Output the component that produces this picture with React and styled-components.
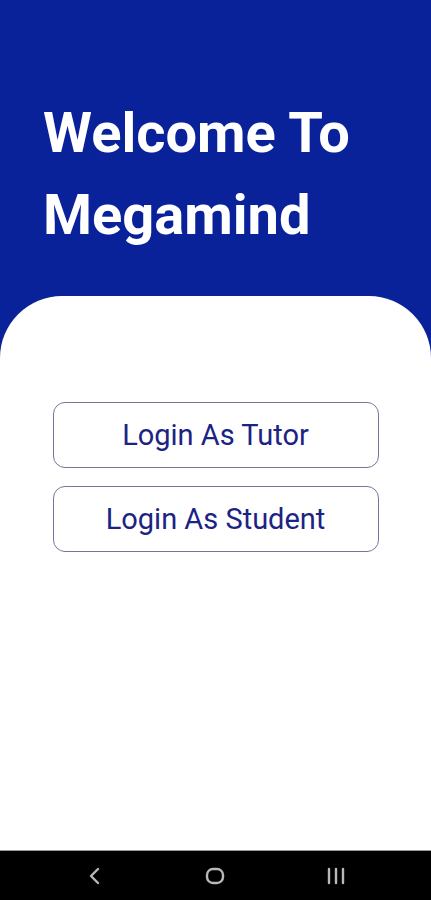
import React from "react";
import styled, { createGlobalStyle } from "styled-components";

const GlobalStyle = createGlobalStyle`
    html, body {
        margin: 0;
        padding: 0;
        background: #ffffff;
    }
    body {
        font-family: Roboto, "Noto Sans", "Liberation Sans", sans-serif;
    }
`;

const Screen = styled.div`
    width: 431px;
    height: 900px;
    display: flex;
    flex-direction: column;
    background: #ffffff;
    overflow: hidden;
`;

const Header = styled.header`
    height: 360px;
    flex-shrink: 0;
    background: #0a2299;
    padding: 92px 0 0 43px;
    box-sizing: border-box;
`;

const Title = styled.h1`
    margin: 0;
    color: #ffffff;
    font-size: 56px;
    line-height: 82px;
    font-weight: 700;
`;

const Card = styled.main`
    flex: 1;
    margin-top: -64px;
    background: #ffffff;
    border-radius: 62px 62px 0 0;
    display: flex;
    flex-direction: column;
    align-items: center;
    gap: 18px;
    padding-top: 106px;
`;

const LoginButton = styled.button`
    width: 326px;
    height: 66px;
    background: #ffffff;
    border: 1.5px solid #737799;
    border-radius: 12px;
    color: #1b2383;
    font-family: Roboto, "Noto Sans", "Liberation Sans", sans-serif;
    font-size: 29px;
    font-weight: 400;
    cursor: pointer;
    box-sizing: border-box;
`;

const NavBar = styled.nav`
    height: 50px;
    flex-shrink: 0;
    background: #000000;
    border-top: 1px solid #9a9a9a;
    display: grid;
    grid-template-columns: repeat(3, 121px);
    align-items: center;
    justify-items: center;
    padding: 0 0 0 33px;
    box-sizing: border-box;
`;

const NavIcon = styled.svg`
    width: 20px;
    height: 18px;
    stroke: #b8b8b8;
    fill: none;
    stroke-width: 2.4;
    stroke-linecap: round;
    stroke-linejoin: round;
`;

const App = () => {
    return (
        <Screen>
            <GlobalStyle />
            <Header>
                <Title>
                    Welcome To
                    <br />
                    Megamind
                </Title>
            </Header>
            <Card>
                <LoginButton>Login As Tutor</LoginButton>
                <LoginButton>Login As Student</LoginButton>
            </Card>
            <NavBar>
                <NavIcon viewBox="0 0 20 18">
                    <path d="M14 2 L7 9 L14 16" />
                </NavIcon>
                <NavIcon viewBox="0 0 20 18">
                    <rect x="2" y="2" width="16" height="14" rx="6" />
                </NavIcon>
                <NavIcon viewBox="0 0 20 18">
                    <path d="M3 2 V16 M10 2 V16 M17 2 V16" />
                </NavIcon>
            </NavBar>
        </Screen>
    );
};

export default App;
